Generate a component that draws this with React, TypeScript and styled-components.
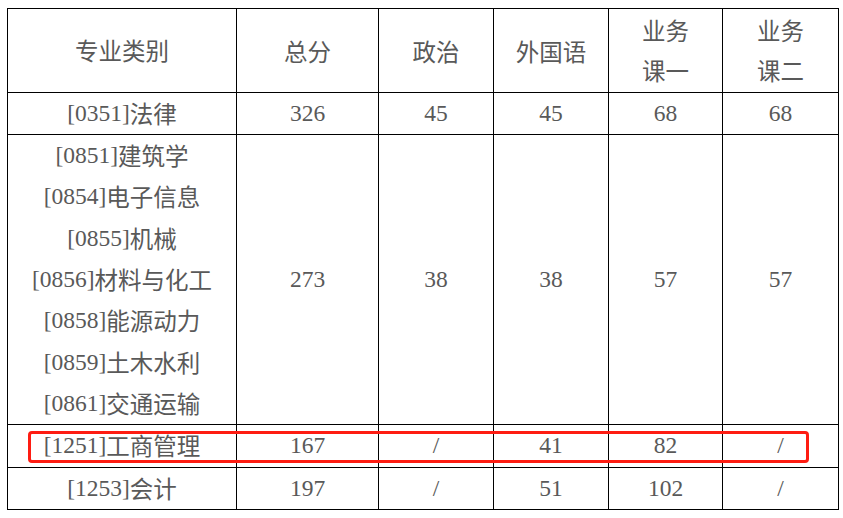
import React from 'react';
import styled, { createGlobalStyle } from 'styled-components';

const GlobalStyle = createGlobalStyle`
  html, body {
    margin: 0;
    padding: 0;
    background: #ffffff;
  }
`;

const Page = styled.div`
  padding: 8px 0 0 7px;
`;

const Wrap = styled.div`
  position: relative;
  width: 831px;
`;

const Table = styled.table`
  border-collapse: collapse;
  table-layout: fixed;
  width: 831px;
  font-family: 'Liberation Serif', 'Noto Sans CJK SC', serif;
  font-size: 23.5px;
  color: #595959;
`;

const Cell = styled.td`
  border: 1px solid #000000;
  padding: 0;
  text-align: center;
  vertical-align: middle;
  white-space: nowrap;
`;

const HeadCell = styled(Cell).attrs({ as: 'th' })`
  font-weight: normal;
  font-family: 'Noto Sans CJK SC', sans-serif;
  font-size: 23.5px;
`;

const Line = styled.div<{ $h?: number }>`
  display: flex;
  align-items: center;
  justify-content: center;
  height: ${(p) => p.$h ?? 41.3}px;
  line-height: 1;
`;

const Cjk = styled.span`
  font-family: 'Noto Sans CJK SC', sans-serif;
`;

const Highlight = styled.div`
  position: absolute;
  left: 21px;
  top: 423px;
  width: 781px;
  height: 32px;
  box-sizing: border-box;
  border: 3px solid #fe1c12;
  border-radius: 4px;
  pointer-events: none;
`;

interface Row {
  majors: [string, string][];
  scores: string[];
}

const rows: Row[] = [
  { majors: [['0351', '法律']], scores: ['326', '45', '45', '68', '68'] },
  {
    majors: [
      ['0851', '建筑学'],
      ['0854', '电子信息'],
      ['0855', '机械'],
      ['0856', '材料与化工'],
      ['0858', '能源动力'],
      ['0859', '土木水利'],
      ['0861', '交通运输'],
    ],
    scores: ['273', '38', '38', '57', '57'],
  },
  { majors: [['1251', '工商管理']], scores: ['167', '/', '41', '82', '/'] },
  { majors: [['1253', '会计']], scores: ['197', '/', '51', '102', '/'] },
];

const widths = [229, 142, 115, 115, 114, 116];

export default function App() {
  return (
    <Page>
      <GlobalStyle />
      <Wrap>
        <Table>
          <colgroup>
            {widths.map((w, i) => (
              <col key={i} style={{ width: w }} />
            ))}
          </colgroup>
          <thead>
            <tr>
              <HeadCell>
                <Line $h={83}>专业类别</Line>
              </HeadCell>
              <HeadCell>总分</HeadCell>
              <HeadCell>政治</HeadCell>
              <HeadCell>外国语</HeadCell>
              <HeadCell>
                <Line $h={40}>业务</Line>
                <Line $h={40}>课一</Line>
              </HeadCell>
              <HeadCell>
                <Line $h={40}>业务</Line>
                <Line $h={40}>课二</Line>
              </HeadCell>
            </tr>
          </thead>
          <tbody>
            {rows.map((row, i) => (
              <tr key={i}>
                <Cell>
                  {row.majors.map(([code, name], j) => (
                    <Line key={j}>
                      [{code}]<Cjk>{name}</Cjk>
                    </Line>
                  ))}
                </Cell>
                {row.scores.map((s, j) => (
                  <Cell key={j}>
                    <Line>{s}</Line>
                  </Cell>
                ))}
              </tr>
            ))}
          </tbody>
        </Table>
        <Highlight />
      </Wrap>
    </Page>
  );
}
